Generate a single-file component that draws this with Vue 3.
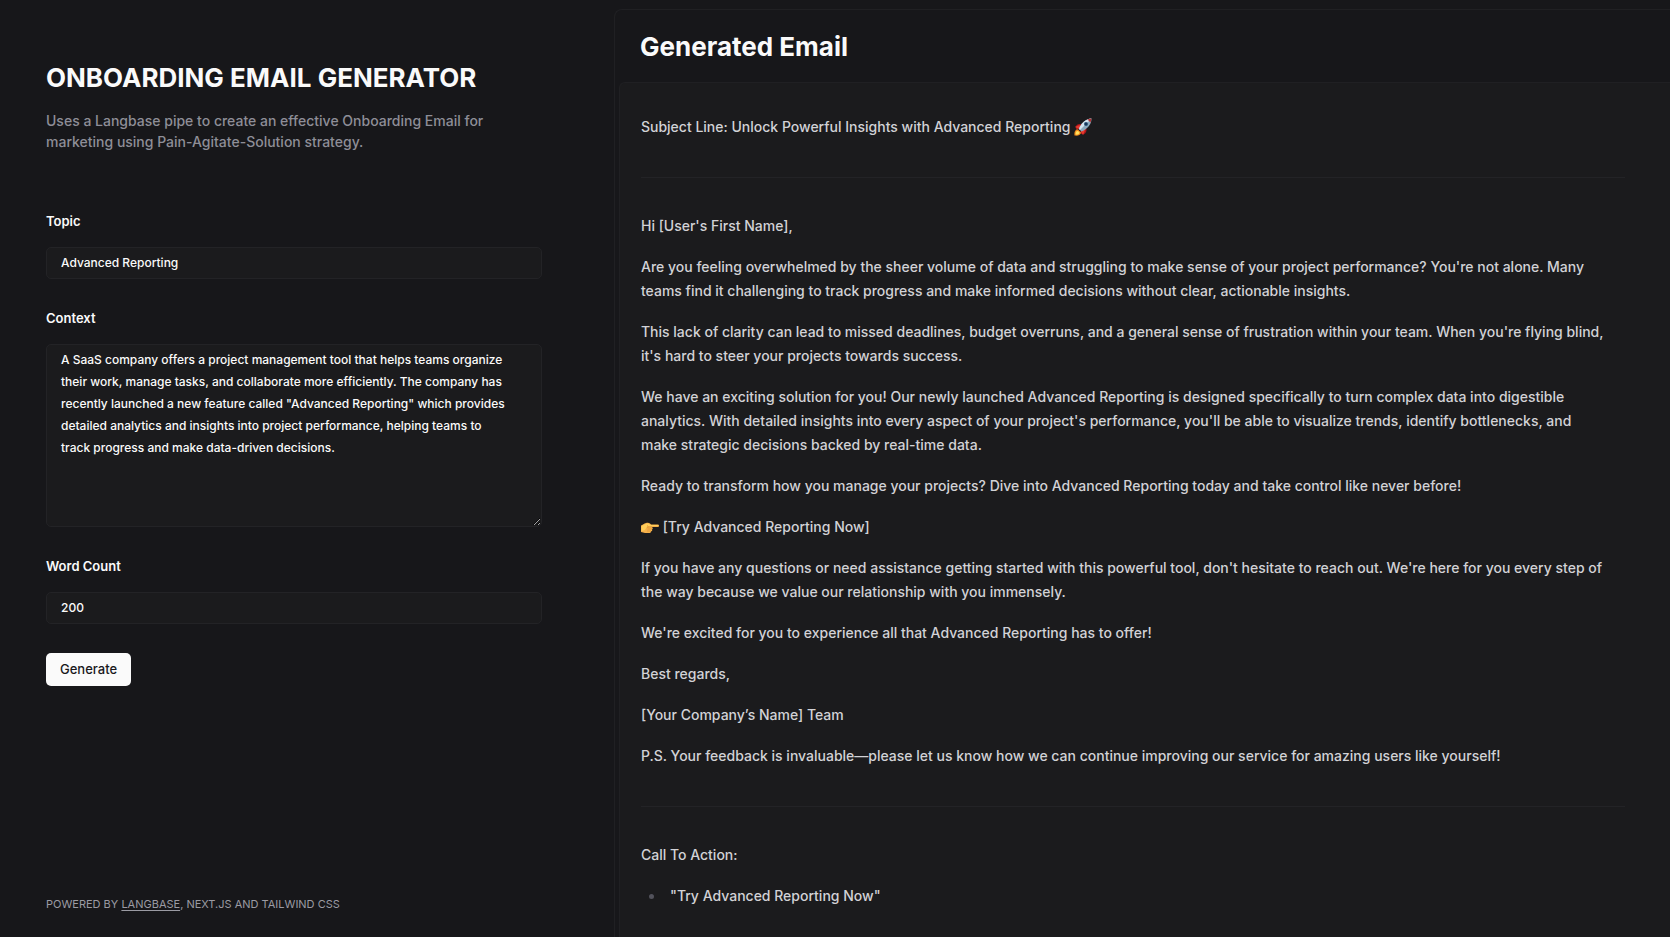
<script setup>
import { ref } from 'vue'

const topic = ref('Advanced Reporting')
const context = ref(
  'A SaaS company offers a project management tool that helps teams organize their work, manage tasks, and collaborate more efficiently. The company has recently launched a new feature called "Advanced Reporting" which provides detailed analytics and insights into project performance, helping teams to track progress and make data-driven decisions.'
)
const wordCount = ref('200')

const beforeAction = [
  "Hi [User's First Name],",
  "Are you feeling overwhelmed by the sheer volume of data and struggling to make sense of your project performance? You're not alone. Many teams find it challenging to track progress and make informed decisions without clear, actionable insights.",
  "This lack of clarity can lead to missed deadlines, budget overruns, and a general sense of frustration within your team. When you're flying blind, it's hard to steer your projects towards success.",
  "We have an exciting solution for you! Our newly launched Advanced Reporting is designed specifically to turn complex data into digestible analytics. With detailed insights into every aspect of your project's performance, you'll be able to visualize trends, identify bottlenecks, and make strategic decisions backed by real-time data.",
  'Ready to transform how you manage your projects? Dive into Advanced Reporting today and take control like never before!'
]
const afterAction = [
  "If you have any questions or need assistance getting started with this powerful tool, don't hesitate to reach out. We're here for you every step of the way because we value our relationship with you immensely.",
  "We're excited for you to experience all that Advanced Reporting has to offer!",
  'Best regards,',
  '[Your Company’s Name] Team',
  'P.S. Your feedback is invaluable—please let us know how we can continue improving our service for amazing users like yourself!'
]
</script>

<template>
  <div class="page">
    <aside class="sidebar">
      <header>
        <h1 class="title">ONBOARDING EMAIL GENERATOR</h1>
        <p class="lead">Uses a Langbase pipe to create an effective Onboarding Email for marketing using Pain-Agitate-Solution strategy.</p>
      </header>
      <form class="form" @submit.prevent>
        <div class="field">
          <label for="topic">Topic</label>
          <input id="topic" v-model="topic" type="text" />
        </div>
        <div class="field">
          <label for="context">Context</label>
          <textarea id="context" v-model="context" rows="8" spellcheck="false"></textarea>
        </div>
        <div class="field">
          <label for="words">Word Count</label>
          <input id="words" v-model="wordCount" type="text" inputmode="numeric" />
        </div>
        <button type="submit">Generate</button>
      </form>
      <footer class="footer">POWERED BY <a href="#langbase">LANGBASE</a>, NEXT.JS AND TAILWIND CSS</footer>
    </aside>

    <main class="panel">
      <h2 class="title panel-title">Generated Email</h2>
      <article class="email">
        <p>
          Subject Line: Unlock Powerful Insights with Advanced Reporting
          <svg class="emoji" viewBox="0 0 36 36" role="img" aria-label="rocket">
            <path fill="#b3161b" d="M3 17c4-6 9-6 14-4l-6 9-6 1zM19 33c6-3 7-9 5-14l-9 6-2 6z" />
            <path fill="#e5392f" d="M2 18l9-4 4 6-4 2zM18 34l4-9-6-4-3 5z" />
            <path fill="#f28a1c" d="M1 35c-1-8 2-13 7-12l6 6c0 5-6 7-13 6z" />
            <path fill="#ffe05c" d="M3 33c0-5 2-8 5-7l3 3c0 3-3 5-8 4z" />
            <path fill="#8ba9bd" d="M10 22C14 10 23 2 35 1c0 12-8 21-20 26z" />
            <path fill="#d5e4ed" d="M10 22C14 10 23 2 35 1L12 24z" />
            <path fill="#b32c2f" d="M27 3l8-2-2 8z" />
            <circle cx="24" cy="12" r="4" fill="#274f75" />
            <circle cx="24" cy="12" r="2" fill="#143150" />
          </svg>
        </p>
        <hr />
        <p v-for="text in beforeAction" :key="text">{{ text }}</p>
        <p>
          <svg class="emoji" viewBox="0 0 36 36" role="img" aria-label="pointing right">
            <path fill="#f5b04a" d="M0 15c3-1 6-4 10-5 3-1 6-1 8 1l2 2h14c3 0 3 5 0 5H22c2 2 2 4 0 5 1 2 0 4-2 4 0 2-2 3-4 3H8c-3 0-5-2-8-2z" />
            <path fill="#ffce5a" d="M1 16c4-2 8-5 12-5 3 0 4 2 7 3h13c2 0 2 2 0 2H19l-7 1-4 7-7 2z" />
            <path fill="none" stroke="#d08a2a" stroke-width="1" d="M13 18h9M13 22h9M12 26h8M12 15c2 0 3 2 1 5" />
          </svg>
          [Try Advanced Reporting Now]
        </p>
        <p v-for="text in afterAction" :key="text">{{ text }}</p>
        <hr />
        <p>Call To Action:</p>
        <ul>
          <li>"Try Advanced Reporting Now"</li>
        </ul>
      </article>
    </main>
  </div>
</template>

<style>
body {
  margin: 0;
  background: #17171a;
}
</style>

<style scoped>
.page {
  display: grid;
  grid-template-columns: 25fr 43fr;
  box-sizing: border-box;
  height: 100vh;
  overflow: hidden;
  padding-top: 9px;
  color: #fafafa;
  background: #17171a;
  font-family: Inter, "Liberation Sans", sans-serif;
  font-size: 14px;
  font-weight: 500;
}

.sidebar {
  display: flex;
  flex-direction: column;
  min-width: 0;
  padding: 50px 72px 24px 46px;
}

.title {
  margin: 0;
  font-size: 26px;
  font-weight: 700;
  line-height: 37px;
}

.lead {
  margin: 14px 0 0;
  color: #8e8e97;
  line-height: 21px;
}

.form {
  display: flex;
  flex-direction: column;
  align-items: flex-start;
  gap: 29px;
  margin-top: 59px;
}

.field {
  display: flex;
  flex-direction: column;
  gap: 15px;
  width: 100%;
}

label {
  font-size: 13px;
  font-weight: 600;
  line-height: 21px;
}

input,
textarea {
  box-sizing: border-box;
  width: 100%;
  margin: 0;
  border: 1px solid #232326;
  border-radius: 5px;
  outline: none;
  color: #fafafa;
  background: #1b1b1d;
  font: 500 12px/22px Inter, "Liberation Sans", sans-serif;
}

input {
  height: 32px;
  padding: 0 14px 2px;
}

textarea {
  display: block;
  height: 183px;
  padding: 4px 31px 4px 14px;
  resize: vertical;
}

button {
  height: 33px;
  padding: 0 14px 2px;
  border: 0;
  border-radius: 5px;
  color: #18181b;
  background: #fafafa;
  font: 500 13px/22px Inter, "Liberation Sans", sans-serif;
}

.footer {
  margin-top: auto;
  color: #9b9ba3;
  font-size: 11px;
  font-weight: 400;
  line-height: 18px;
}

.footer a {
  color: inherit;
  text-underline-offset: 2px;
}

.panel {
  display: flex;
  flex-direction: column;
  min-width: 0;
  padding-left: 4px;
  border: 1px solid #202023;
  border-width: 1px 0 0 1px;
  border-radius: 8px 0 0 0;
}

.panel-title {
  padding: 18px 21px 17px;
}

.email {
  flex: 1;
  min-height: 0;
  padding: 32px 45px 0 21px;
  border: 1px solid #202023;
  border-width: 1px 0 0 1px;
  border-radius: 6px 0 0 0;
  color: #d2d2d6;
  background: #1b1b1d;
  line-height: 24px;
}

.email p {
  margin: 0 0 17px;
  padding-right: 18px;
}

.email hr {
  height: 1px;
  margin: 38px 0 36px;
  border: 0;
  background: #232326;
}

.email ul {
  margin: 0;
  padding-left: 8px;
  list-style: none;
}

.email li {
  display: flex;
  align-items: center;
  gap: 16px;
}

.email li::before {
  content: "";
  width: 5px;
  height: 5px;
  border-radius: 50%;
  background: #52525b;
}

.emoji {
  width: 18px;
  height: 18px;
  vertical-align: -4px;
}
</style>
